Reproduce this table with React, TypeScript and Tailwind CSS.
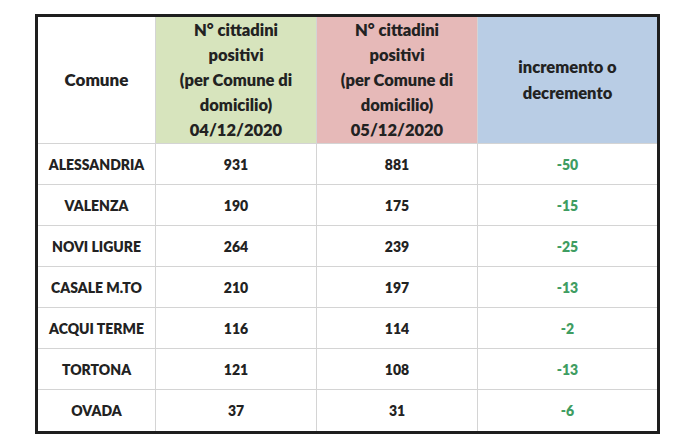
import React from "react";

const rows = [
  ["ALESSANDRIA", "931", "881", "-50"],
  ["VALENZA", "190", "175", "-15"],
  ["NOVI LIGURE", "264", "239", "-25"],
  ["CASALE M.TO", "210", "197", "-13"],
  ["ACQUI TERME", "116", "114", "-2"],
  ["TORTONA", "121", "108", "-13"],
  ["OVADA", "37", "31", "-6"],
];

export default function App() {
  return (
    <div
      className="w-[680px] h-[448px] bg-white pt-[14px] pl-[35px]"
      style={{ fontFamily: "Lato, 'Open Sans', sans-serif" }}
    >
      <div className="w-[625px] border-[3px] border-[#1e1e1e] grid grid-cols-[118px_161px_161px_179px] text-[#222]">
        <div className="h-[127px] flex items-center justify-center font-extrabold text-[17px] border-r border-b border-[#d4d4d4]">
          Comune
        </div>
        <div className="h-[127px] flex items-center justify-center text-center font-extrabold text-[16.5px] leading-[25px] bg-[#d7e4bd] border-r border-b border-[#d4d4d4]">
          <div>
            N° cittadini<br />positivi<br />(per Comune di<br />domicilio)<br />04/12/2020
          </div>
        </div>
        <div className="h-[127px] flex items-center justify-center text-center font-extrabold text-[16.5px] leading-[25px] bg-[#e6b9b8] border-r border-b border-[#d4d4d4]">
          <div>
            N° cittadini<br />positivi<br />(per Comune di<br />domicilio)<br />05/12/2020
          </div>
        </div>
        <div className="h-[127px] flex items-center justify-center text-center font-extrabold text-[16.5px] leading-[26px] bg-[#b9cde5] border-b border-[#d4d4d4]">
          <div>
            incremento o<br />decremento
          </div>
        </div>
        {rows.map((r, i) => {
          const last = i === rows.length - 1;
          const bb = last ? "" : "border-b";
          return (
            <React.Fragment key={r[0]}>
              <div className={`h-[41px] flex items-center justify-center font-extrabold text-[14px] border-r border-[#d4d4d4] ${bb}`}>
                {r[0]}
              </div>
              <div className={`h-[41px] flex items-center justify-center font-extrabold text-[14px] border-r border-[#d4d4d4] ${bb}`}>
                {r[1]}
              </div>
              <div className={`h-[41px] flex items-center justify-center font-extrabold text-[14px] border-r border-[#d4d4d4] ${bb}`}>
                {r[2]}
              </div>
              <div className={`h-[41px] flex items-center justify-center font-extrabold text-[14px] text-[#3f9d62] border-[#d4d4d4] ${bb}`}>
                {r[3]}
              </div>
            </React.Fragment>
          );
        })}
      </div>
    </div>
  );
}
